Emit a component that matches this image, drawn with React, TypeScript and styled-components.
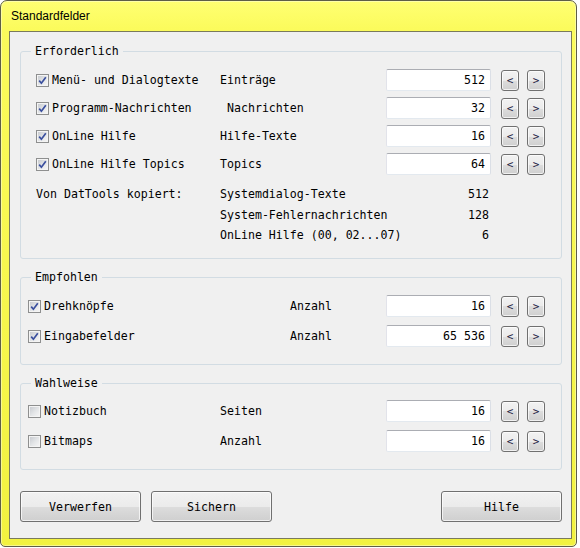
import React from 'react';
import styled, { createGlobalStyle } from 'styled-components';

const GlobalStyle = createGlobalStyle`
  html, body {
    margin: 0;
    padding: 0;
    background: #ffffff;
  }
  body {
    font-family: "DejaVu Sans Mono", "Liberation Mono", monospace;
    font-size: 11.6px;
    color: #000000;
  }
`;

const Window = styled.div`
  box-sizing: border-box;
  width: 577px;
  height: 547px;
  border: 1px solid #5e5e46;
  border-radius: 7px 7px 5px 5px;
  padding: 0 4px 7px 8px;
  display: flex;
  flex-direction: column;
  background: linear-gradient(to bottom, #ffff72 0px, #fbfb5c 28px, #f2f240 100%);
  box-shadow: inset 0 0 0 1px rgba(255, 255, 255, 0.4);
`;

const TitleBar = styled.div`
  height: 30px;
  line-height: 31px;
  padding-left: 2px;
  font-family: "Liberation Sans", Arial, sans-serif;
  font-size: 12px;
  color: #000000;
`;

const Client = styled.div`
  flex: 1;
  box-sizing: border-box;
  border: 1px solid #7a7a5c;
  background: #f0f0f0;
  padding: 12px 9px 15px 10px;
  display: flex;
  flex-direction: column;
`;

const Group = styled.fieldset`
  margin: 0;
  padding: 0;
  min-width: 0;
  border: 1px solid #d2dce3;
  border-radius: 3px;
  & + & {
    margin-top: 11px;
  }
`;

const Legend = styled.legend`
  margin-left: 10px;
  padding: 0 4px;
  line-height: 14px;
  font-size: 11.6px;
  color: #000000;
`;

const GroupBody = styled.div<{ $pt: number; $pb: number; $pl: number }>`
  padding: ${(p) => p.$pt}px 15px ${(p) => p.$pb}px ${(p) => p.$pl}px;
`;

const Row = styled.div<{ $first: number; $second: number; $h: number }>`
  display: grid;
  grid-template-columns: ${(p) => p.$first}px ${(p) => p.$second}px 105px auto;
  align-items: center;
  height: ${(p) => p.$h}px;
`;

const CheckLabel = styled.label`
  display: flex;
  align-items: center;
  gap: 3px;
  white-space: pre;
`;

const Box = styled.span`
  box-sizing: border-box;
  width: 13px;
  height: 13px;
  border: 1px solid #8e8f8f;
  padding: 1px;
  background: #f4f4f4;
  display: flex;
  & > span {
    flex: 1;
    display: flex;
    align-items: center;
    justify-content: center;
    background: linear-gradient(135deg, #c9ccd1 0%, #e4e6e8 55%, #f4f4f4 100%);
  }
`;

const Caption = styled.span`
  white-space: pre;
`;

const ValueInput = styled.input`
  box-sizing: border-box;
  width: 105px;
  height: 22px;
  margin: 0;
  padding: 0 5px 0 0;
  border: 1px solid;
  border-color: #abadb3 #dbdfe6 #e3e9ef #e2e3ea;
  border-radius: 2px;
  background: #ffffff;
  text-align: right;
  font-family: "DejaVu Sans Mono", "Liberation Mono", monospace;
  font-size: 11.6px;
  color: #000000;
  outline: none;
`;

const Spinner = styled.div`
  display: flex;
  gap: 8px;
  margin-left: 10px;
`;

const SpinButton = styled.button`
  box-sizing: border-box;
  width: 18px;
  height: 21px;
  padding: 0;
  border: 1px solid #707070;
  border-radius: 3px;
  background: linear-gradient(to bottom, #f2f2f2 0%, #ebebeb 50%, #dddddd 50%, #cfcfcf 100%);
  box-shadow: inset 0 0 0 1px rgba(255, 255, 255, 0.7);
  font-family: "DejaVu Sans Mono", "Liberation Mono", monospace;
  font-size: 11px;
  line-height: 19px;
  color: #1a1a40;
`;

const InfoGrid = styled.div`
  display: grid;
  grid-template-columns: 184px 269px;
  grid-auto-rows: 20.5px;
  align-items: center;
  margin-top: 6px;
`;

const InfoValue = styled.span`
  display: flex;
  justify-content: space-between;
  white-space: pre;
`;

const ButtonBar = styled.div`
  display: flex;
  gap: 10px;
  margin-top: 21px;
`;

const PushButton = styled.button<{ $right?: boolean }>`
  box-sizing: border-box;
  width: 121px;
  height: 31px;
  padding: 0;
  margin-left: ${(p) => (p.$right ? 'auto' : '0')};
  border: 1px solid #707070;
  border-radius: 3px;
  background: linear-gradient(to bottom, #f2f2f2 0%, #ebebeb 50%, #dddddd 50%, #cfcfcf 100%);
  box-shadow: inset 0 0 0 1px rgba(255, 255, 255, 0.7);
  font-family: "DejaVu Sans Mono", "Liberation Mono", monospace;
  font-size: 11.6px;
  color: #000000;
`;

const CheckBox = ({ checked }: { checked: boolean }) => (
  <Box>
    <span>
      {checked && (
        <svg width="9" height="9" viewBox="0 0 9 9">
          <path d="M1.2 4.6 L3.4 7.2 L7.8 1.2" fill="none" stroke="#3a4f9e" strokeWidth="1.7" />
        </svg>
      )}
    </span>
  </Box>
);

interface Field {
  label: string;
  checked: boolean;
  unit: string;
  value: string;
}

const required: Field[] = [
  { label: 'Menü- und Dialogtexte', checked: true, unit: 'Einträge', value: '512' },
  { label: 'Programm-Nachrichten', checked: true, unit: ' Nachrichten', value: '32' },
  { label: 'OnLine Hilfe', checked: true, unit: 'Hilfe-Texte', value: '16' },
  { label: 'OnLine Hilfe Topics', checked: true, unit: 'Topics', value: '64' },
];

const recommended: Field[] = [
  { label: 'Drehknöpfe', checked: true, unit: 'Anzahl', value: '16' },
  { label: 'Eingabefelder', checked: true, unit: 'Anzahl', value: '65 536' },
];

const optional: Field[] = [
  { label: 'Notizbuch', checked: false, unit: 'Seiten', value: '16' },
  { label: 'Bitmaps', checked: false, unit: 'Anzahl', value: '16' },
];

const copied = [
  { label: 'Systemdialog-Texte', value: '512' },
  { label: 'System-Fehlernachrichten', value: '128' },
  { label: 'OnLine Hilfe (00, 02...07)', value: '6' },
];

const FieldRow = ({ field, first, second, h }: { field: Field; first: number; second: number; h: number }) => (
  <Row $first={first} $second={second} $h={h}>
    <CheckLabel>
      <CheckBox checked={field.checked} />
      {field.label}
    </CheckLabel>
    <Caption>{field.unit}</Caption>
    <ValueInput readOnly defaultValue={field.value} />
    <Spinner>
      <SpinButton>&lt;</SpinButton>
      <SpinButton>&gt;</SpinButton>
    </Spinner>
  </Row>
);

const App = () => {
  return (
    <>
      <GlobalStyle />
      <Window>
        <TitleBar>Standardfelder</TitleBar>
        <Client>
          <Group>
            <Legend>Erforderlich</Legend>
            <GroupBody $pt={8} $pb={12.5} $pl={15}>
              {required.map((f) => (
                <FieldRow key={f.label} field={f} first={184} second={166} h={28} />
              ))}
              <InfoGrid>
                {copied.map((c, i) => (
                  <React.Fragment key={c.label}>
                    <span>{i === 0 ? 'Von DatTools kopiert:' : ''}</span>
                    <InfoValue>
                      <span>{c.label}</span>
                      <span>{c.value}</span>
                    </InfoValue>
                  </React.Fragment>
                ))}
              </InfoGrid>
            </GroupBody>
          </Group>
          <Group>
            <Legend>Empfohlen</Legend>
            <GroupBody $pt={7} $pb={13} $pl={7}>
              {recommended.map((f) => (
                <FieldRow key={f.label} field={f} first={262} second={96} h={30} />
              ))}
            </GroupBody>
          </Group>
          <Group>
            <Legend>Wahlweise</Legend>
            <GroupBody $pt={6} $pb={13} $pl={7}>
              {optional.map((f) => (
                <FieldRow key={f.label} field={f} first={192} second={166} h={30} />
              ))}
            </GroupBody>
          </Group>
          <ButtonBar>
            <PushButton>Verwerfen</PushButton>
            <PushButton>Sichern</PushButton>
            <PushButton $right>Hilfe</PushButton>
          </ButtonBar>
        </Client>
      </Window>
    </>
  );
};

export default App;
